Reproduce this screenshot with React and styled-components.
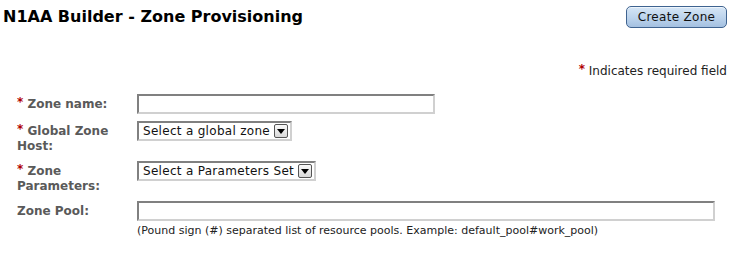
import styled, { createGlobalStyle } from "styled-components";

const GlobalStyle = createGlobalStyle`
	body {
		margin: 0;
		background: #fff;
		font-family: "DejaVu Sans", Verdana, sans-serif;
	}
`;

const App = () => {
	return (
		<>
			<GlobalStyle />
			<Page>
				<Header>
					<Title>N1AA Builder - Zone Provisioning</Title>
					<PrimaryButton type="button">Create Zone</PrimaryButton>
				</Header>
				<RequiredNote>
					<Star>*</Star> Indicates required field
				</RequiredNote>
				<Form>
					<Label>
						<Star>*</Star> Zone name:
					</Label>
					<Field>
						<TextInput type="text" width={298} />
					</Field>

					<Label>
						<Star>*</Star> Global Zone
						<br />
						Host:
					</Label>
					<Field>
						<FakeSelect width={155}>
							<span>Select a global zone</span>
							<DropButton>
								<ArrowDown />
							</DropButton>
						</FakeSelect>
					</Field>

					<Label>
						<Star>*</Star> Zone
						<br />
						Parameters:
					</Label>
					<Field>
						<FakeSelect width={179}>
							<span>Select a Parameters Set</span>
							<DropButton>
								<ArrowDown />
							</DropButton>
						</FakeSelect>
					</Field>

					<Label>Zone Pool:</Label>
					<Field>
						<TextInput type="text" width={578} />
						<Hint>
							(Pound sign (#) separated list of resource pools. Example:
							default_pool#work_pool)
						</Hint>
					</Field>
				</Form>
			</Page>
		</>
	);
};

const ArrowDown = () => (
	<svg width="8" height="5" viewBox="0 0 8 5">
		<path d="M0 0h8L4 5z" fill="#000" />
	</svg>
);

const Page = styled.div`
	width: 733px;
	height: 268px;
	box-sizing: border-box;
	padding: 6px 6px 0 3px;
`;

const Header = styled.div`
	display: flex;
	justify-content: space-between;
	align-items: center;
`;

const Title = styled.h1`
	margin: 0;
	font-size: 16px;
	font-weight: bold;
	color: #000;
	line-height: 22px;
`;

const PrimaryButton = styled.button`
	width: 101px;
	height: 22px;
	padding: 0;
	border: 1px solid #3f6390;
	border-radius: 5px;
	background: linear-gradient(#d6e6f6, #b9d1eb 60%, #a4c0e0);
	font-family: "DejaVu Sans", Verdana, sans-serif;
	font-size: 12px;
	letter-spacing: 0.3px;
	color: #111;
	box-shadow: inset 0 1px 0 #eef5fc;
`;

const RequiredNote = styled.div`
	text-align: right;
	margin-top: 36px;
	font-size: 12px;
	color: #222;
	line-height: 15px;
`;

const Star = styled.span`
	color: #b00000;
	font-weight: bold;
	font-size: 12px;
	line-height: 0;
	vertical-align: 2px;
`;

const Form = styled.div`
	display: grid;
	grid-template-columns: 110px 1fr;
	column-gap: 10px;
	row-gap: 7px;
	margin: 15px 0 0 14px;
	align-items: start;
`;

const Label = styled.div`
	font-size: 12px;
	font-weight: bold;
	color: #5a5a5a;
	line-height: 15px;
	padding-top: 3px;
`;

const Field = styled.div`
	display: flex;
	flex-direction: column;
	align-items: flex-start;
`;

const TextInput = styled.input`
	box-sizing: border-box;
	width: ${(p) => p.width}px;
	height: 20px;
	margin: 0;
	padding: 0 3px;
	border-style: solid;
	border-width: 2px;
	border-color: #808080 #d0d0d0 #d0d0d0 #808080;
	background: #fff;
	font-family: "DejaVu Sans", Verdana, sans-serif;
	font-size: 12px;
	outline: none;
`;

const FakeSelect = styled.div`
	box-sizing: border-box;
	width: ${(p) => p.width}px;
	height: 20px;
	display: flex;
	align-items: center;
	justify-content: space-between;
	padding: 0 2px 0 4px;
	border-style: solid;
	border-width: 2px;
	border-color: #808080 #d0d0d0 #d0d0d0 #808080;
	background: #fff;
	font-size: 12px;
	letter-spacing: 0.3px;
	color: #111;
	white-space: nowrap;
`;

const DropButton = styled.span`
	box-sizing: border-box;
	width: 14px;
	height: 14px;
	display: flex;
	align-items: center;
	justify-content: center;
	border: 1px solid #555;
	border-radius: 2px;
	background: linear-gradient(#fafafa, #d8d8d8);
`;

const Hint = styled.div`
	margin-top: 3px;
	font-size: 11px;
	color: #222;
	line-height: 13px;
`;

export default App;
